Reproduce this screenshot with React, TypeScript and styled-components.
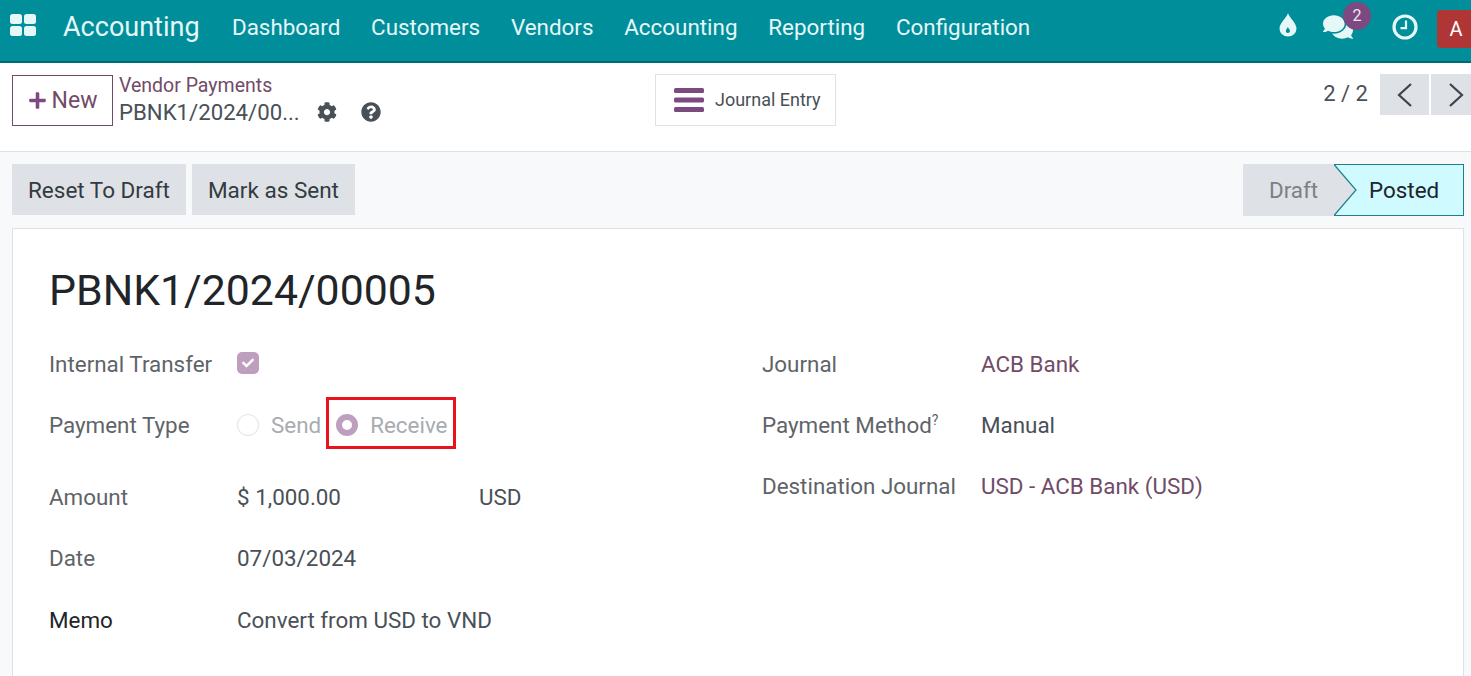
import React, { FC } from "react";
import styled, { createGlobalStyle } from "styled-components";
import { FaCheck, FaCog, FaComments, FaPlus, FaQuestionCircle } from "react-icons/fa";

const Colors = {
    teal: "#018e9b",
    purple: "#714b67",
    purpleIcon: "#7c4a80",
    text: "#495057",
    label: "#5f6469",
    gray: "#dee2e6",
    muted: "#a8abaf",
};

const menuItems = ["Dashboard", "Customers", "Vendors", "Accounting", "Reporting", "Configuration"];

const GlobalStyle = createGlobalStyle`
    html, body {
        margin: 0;
        padding: 0;
        height: 100%;
        background: #f8f9fa;
        overflow: hidden;
    }
    body {
        font-family: Roboto, "Liberation Sans", sans-serif;
        color: ${Colors.text};
    }
`;

const AppsIcon: FC = () => (
    <svg width="26" height="22" viewBox="0 0 26 22" fill="#e6f7f8">
        <rect x="0" y="0" width="12" height="10" rx="2.5" />
        <rect x="14" y="0" width="12" height="10" rx="2.5" />
        <rect x="0" y="12" width="12" height="10" rx="2.5" />
        <rect x="14" y="12" width="12" height="10" rx="2.5" />
    </svg>
);

const DropIcon: FC = () => (
    <svg width="18" height="24" viewBox="0 0 18 24">
        <path d="M9 0 C10.5 5 17.5 10 17.5 15.5 A8.5 8 0 0 1 0.5 15.5 C0.5 10 7.5 5 9 0 Z" fill="#e6f7f8" />
        <path d="M8.8 14 C9.4 15.6 11 16.4 11 18 A2.1 2.1 0 0 1 6.8 18 C6.8 16.4 8.4 15.6 8.8 14 Z" fill={Colors.teal} />
    </svg>
);

const ClockIcon: FC = () => (
    <svg width="26" height="26" viewBox="0 0 26 26" fill="none" stroke="#e6f7f8">
        <circle cx="13" cy="13" r="11" strokeWidth="3.2" />
        <path d="M14 6.5 V14.2 H8.5" strokeWidth="2.2" />
    </svg>
);

const BarsIcon: FC = () => (
    <svg width="30" height="24" viewBox="0 0 30 24" fill={Colors.purpleIcon}>
        <rect x="0" y="0" width="30" height="5" rx="1.5" />
        <rect x="0" y="9.5" width="30" height="5" rx="1.5" />
        <rect x="0" y="19" width="30" height="5" rx="1.5" />
    </svg>
);

const Chevron: FC<{ d: string }> = ({ d }) => (
    <svg width="16" height="24" viewBox="0 0 16 24" fill="none" stroke="#3d4349" strokeWidth="2.2">
        <path d={d} />
    </svg>
);

const FormField: FC<{ label: string; height: number; strong?: boolean; children: React.ReactNode }> = ({
    label,
    height,
    strong,
    children,
}) => (
    <FieldRow $height={height}>
        <FieldLabel $strong={strong}>{label}</FieldLabel>
        {children}
    </FieldRow>
);

const App: FC = () => {
    return (
        <Page>
            <GlobalStyle />
            <Navbar>
                <AppsButton>
                    <AppsIcon />
                </AppsButton>
                <Brand>Accounting</Brand>
                <Menu>
                    {menuItems.map((item) => (
                        <MenuItem key={item}>{item}</MenuItem>
                    ))}
                </Menu>
                <Systray>
                    <DropSlot>
                        <DropIcon />
                    </DropSlot>
                    <ChatSlot>
                        <FaComments size={30} color="#e6f7f8" />
                        <Badge>2</Badge>
                    </ChatSlot>
                    <ClockSlot>
                        <ClockIcon />
                    </ClockSlot>
                    <Avatar>A</Avatar>
                </Systray>
            </Navbar>

            <ControlPanel>
                <NewButton>
                    <FaPlus size={19} color={Colors.purpleIcon} />
                    New
                </NewButton>
                <Breadcrumb>
                    <BreadcrumbLink>Vendor Payments</BreadcrumbLink>
                    <BreadcrumbCurrent>
                        <RecordName>PBNK1/2024/00...</RecordName>
                        <FaCog size={20} color={Colors.text} />
                        <FaQuestionCircle size={20} color={Colors.text} />
                    </BreadcrumbCurrent>
                </Breadcrumb>
                <JournalButton>
                    <BarsIcon />
                    <JournalLabel>Journal Entry</JournalLabel>
                </JournalButton>
                <Pager>
                    <PagerValue>2 / 2</PagerValue>
                    <PagerButton>
                        <Chevron d="M14 1 L2 12 L14 23" />
                    </PagerButton>
                    <PagerButton>
                        <Chevron d="M2 1 L14 12 L2 23" />
                    </PagerButton>
                </Pager>
            </ControlPanel>

            <StatusBar>
                <ActionButton>Reset To Draft</ActionButton>
                <ActionButton>Mark as Sent</ActionButton>
                <Stages>
                    <DraftStage>Draft</DraftStage>
                    <PostedStage>
                        <StageArrow width="23" height="51" viewBox="0 0 23 51">
                            <path d="M0 0 L22 25.5 L0 51 Z" fill={Colors.gray} />
                            <path d="M0 0 L22 25.5 L0 51" fill="none" stroke="#1f7f88" strokeWidth="1.2" />
                        </StageArrow>
                        Posted
                    </PostedStage>
                </Stages>
            </StatusBar>

            <Sheet>
                <Title>PBNK1/2024/00005</Title>
                <Columns>
                    <LeftColumn>
                        <FormField label="Internal Transfer" height={61}>
                            <Checkbox>
                                <FaCheck size={12} color="#fff" />
                            </Checkbox>
                        </FormField>
                        <FormField label="Payment Type" height={72}>
                            <RadioGroup>
                                <Radio />
                                <RadioText>Send</RadioText>
                                <Highlight>
                                    <Radio $checked />
                                    <RadioText>Receive</RadioText>
                                </Highlight>
                            </RadioGroup>
                        </FormField>
                        <FormField label="Amount" height={61}>
                            <AmountValue>$ 1,000.00</AmountValue>
                            <Value>USD</Value>
                        </FormField>
                        <FormField label="Date" height={62}>
                            <Value>07/03/2024</Value>
                        </FormField>
                        <FormField label="Memo" height={62} strong>
                            <Value>Convert from USD to VND</Value>
                        </FormField>
                    </LeftColumn>
                    <RightColumn>
                        <RightField>
                            <RightLabel>Journal</RightLabel>
                            <LinkValue>ACB Bank</LinkValue>
                        </RightField>
                        <RightField>
                            <RightLabel>
                                Payment Method<Help>?</Help>
                            </RightLabel>
                            <Value>Manual</Value>
                        </RightField>
                        <RightField>
                            <RightLabel>Destination Journal</RightLabel>
                            <LinkValue>USD - ACB Bank (USD)</LinkValue>
                        </RightField>
                    </RightColumn>
                </Columns>
            </Sheet>
        </Page>
    );
};

export default App;

const Page = styled.div`
    width: 1471px;
    height: 676px;
    overflow: hidden;
    display: flex;
    flex-direction: column;
`;

const Navbar = styled.header`
    height: 61px;
    flex: none;
    display: flex;
    align-items: center;
    background: ${Colors.teal};
    border-bottom: 2px solid #006b75;
    color: #e6f7f8;
`;

const AppsButton = styled.div`
    display: flex;
    margin: -11px 0 0 10px;
    width: 53px;
`;

const Brand = styled.div`
    font-size: 27px;
    width: 169px;
    margin-top: -7px;
`;

const Menu = styled.nav`
    display: flex;
    gap: 30.8px;
    margin-top: -7px;
`;

const MenuItem = styled.div`
    font-size: 22.4px;
`;

const Systray = styled.div`
    display: flex;
    align-items: center;
    margin-left: auto;
    margin-top: -8px;
`;

const DropSlot = styled.div`
    display: flex;
    margin: -3px 26px 0 0;
`;

const ChatSlot = styled.div`
    position: relative;
    display: flex;
    margin-right: 39px;
`;

const ClockSlot = styled.div`
    display: flex;
    margin-right: 19px;
`;

const Badge = styled.span`
    position: absolute;
    top: -10px;
    left: 20px;
    width: 28px;
    height: 28px;
    border-radius: 50%;
    background: ${Colors.purpleIcon};
    color: #f0e6f0;
    font-size: 16px;
    display: flex;
    align-items: center;
    justify-content: center;
`;

const Avatar = styled.div`
    width: 34px;
    height: 38px;
    margin-top: 4px;
    padding-left: 4px;
    box-sizing: border-box;
    border-radius: 4px 0 0 4px;
    background: #b03535;
    color: #fff;
    font-size: 20px;
    display: flex;
    align-items: center;
    justify-content: center;
`;

const ControlPanel = styled.div`
    height: 89px;
    flex: none;
    box-sizing: border-box;
    background: #fff;
    border-bottom: 1px solid ${Colors.gray};
    display: flex;
    align-items: flex-start;
    padding: 11px 0 0 12px;
`;

const NewButton = styled.div`
    width: 101px;
    height: 51px;
    margin-top: 1px;
    box-sizing: border-box;
    border: 1px solid ${Colors.purple};
    color: ${Colors.purple};
    font-size: 23px;
    display: flex;
    align-items: center;
    justify-content: center;
    gap: 5px;
`;

const Breadcrumb = styled.div`
    width: 536px;
    margin-left: 6px;
    display: flex;
    flex-direction: column;
`;

const BreadcrumbLink = styled.div`
    color: ${Colors.purple};
    font-size: 19.5px;
    line-height: 23px;
`;

const BreadcrumbCurrent = styled.div`
    display: flex;
    align-items: center;
    gap: 24px;
    margin-top: 1px;
`;

const RecordName = styled.div`
    font-size: 22.2px;
    line-height: 28px;
    width: 175px;
    margin-right: -1px;
    white-space: nowrap;
`;

const JournalButton = styled.div`
    width: 181px;
    height: 52px;
    box-sizing: border-box;
    border: 1px solid ${Colors.gray};
    background: #fff;
    font-size: 18px;
    display: flex;
    align-items: center;
    gap: 11px;
    padding-left: 18px;
`;

const JournalLabel = styled.span`
    margin-top: -2px;
`;

const Pager = styled.div`
    margin: 0 -9px 0 auto;
    display: flex;
    align-items: center;
    gap: 2px;
`;

const PagerValue = styled.div`
    font-size: 22px;
    margin: -2px 10px 0 0;
`;

const PagerButton = styled.div`
    width: 49px;
    height: 41px;
    background: ${Colors.gray};
    display: flex;
    align-items: center;
    justify-content: center;
`;

const StatusBar = styled.div`
    flex: none;
    display: flex;
    align-items: flex-start;
    gap: 6px;
    padding: 12px 7px 12px 12px;
    height: 76px;
    box-sizing: border-box;
`;

const ActionButton = styled.div`
    height: 51px;
    padding: 0 16px;
    background: ${Colors.gray};
    color: #343a40;
    font-size: 22.5px;
    display: flex;
    align-items: center;
`;

const Stages = styled.div`
    margin-left: auto;
    display: flex;
    font-size: 22.4px;
`;

const DraftStage = styled.div`
    width: 91px;
    height: 52px;
    padding-left: 26px;
    box-sizing: border-box;
    background: ${Colors.gray};
    color: #7b8087;
    display: flex;
    align-items: center;
`;

const PostedStage = styled.div`
    position: relative;
    width: 130px;
    height: 52px;
    padding-left: 35px;
    box-sizing: border-box;
    background: #cffaff;
    border: 1px solid #1f7f88;
    border-left: none;
    color: #212529;
    display: flex;
    align-items: center;
`;

const StageArrow = styled.svg`
    position: absolute;
    left: 0;
    top: -1px;
    height: 52px;
`;

const Sheet = styled.main`
    flex: 1;
    margin: 0 7px 0 12px;
    padding: 35px 36px 0;
    background: #fff;
    border: 1px solid ${Colors.gray};
    border-bottom: none;
`;

const Title = styled.h1`
    margin: 0;
    font-size: 42.8px;
    font-weight: 400;
    line-height: 52px;
    color: #212529;
`;

const Columns = styled.div`
    display: flex;
    margin-top: 33px;
`;

const LeftColumn = styled.div`
    width: 713px;
    flex: none;
`;

const RightColumn = styled.div`
    flex: 1;
`;

const FieldRow = styled.div<{ $height: number }>`
    height: ${(p) => p.$height}px;
    display: flex;
    align-items: flex-start;
    font-size: 22.4px;
    line-height: 30px;
`;

const FieldLabel = styled.div<{ $strong?: boolean }>`
    width: 188px;
    flex: none;
    color: ${(p) => (p.$strong ? "#212529" : Colors.label)};
`;

const Help = styled.sup`
    font-size: 14px;
    line-height: 0;
`;

const Value = styled.div`
    color: ${Colors.text};
`;

const AmountValue = styled(Value)`
    width: 242px;
`;

const Checkbox = styled.div`
    width: 22px;
    height: 22px;
    margin-top: 3px;
    border-radius: 5px;
    background: #bf9fbf;
    display: flex;
    align-items: center;
    justify-content: center;
`;

const RadioGroup = styled.div`
    display: flex;
    align-items: center;
    height: 30px;
`;

const Radio = styled.span<{ $checked?: boolean }>`
    width: 22px;
    height: 22px;
    box-sizing: border-box;
    border-radius: 50%;
    flex: none;
    background: #fff;
    border: ${(p) => (p.$checked ? "6px solid #bf9fbf" : "1px solid #dee2e6")};
`;

const RadioText = styled.span`
    color: ${Colors.muted};
    margin-left: 12px;
`;

const Highlight = styled.div`
    display: flex;
    align-items: center;
    box-sizing: border-box;
    height: 52px;
    margin: -4px 0 0 5px;
    padding: 4px 6px 0 7px;
    border: 3px solid #e8131c;
`;

const RightField = styled.div`
    display: flex;
    align-items: flex-start;
    height: 61px;
    font-size: 22.4px;
    line-height: 30px;
`;

const RightLabel = styled.div`
    width: 219px;
    flex: none;
    color: ${Colors.label};
`;

const LinkValue = styled.div`
    color: ${Colors.purple};
`;
